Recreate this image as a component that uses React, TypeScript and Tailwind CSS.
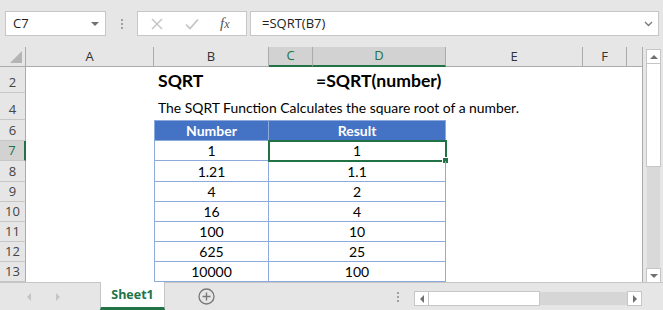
import React from "react";

const ui = { fontFamily: '"Open Sans", "Noto Sans", sans-serif' };
const cal = { fontFamily: 'Lato, "Liberation Sans", sans-serif' };

const headCols = [
  { key: "A", w: "w-[128px]", sel: false },
  { key: "B", w: "w-[115px]", sel: false },
  { key: "C", w: "w-[44px]", sel: true },
  { key: "D", w: "w-[133px]", sel: true },
  { key: "E", w: "w-[137px]", sel: false },
  { key: "F", w: "w-[44px]", sel: false },
];

const data = [
  { n: "1", r: "1", h: "h-[20px]" },
  { n: "1.21", r: "1.1", h: "h-[21px]" },
  { n: "4", r: "2", h: "h-[20px]" },
  { n: "16", r: "4", h: "h-[20px]" },
  { n: "100", r: "10", h: "h-[20px]" },
  { n: "625", r: "25", h: "h-[20px]" },
  { n: "10000", r: "100", h: "h-[20px]" },
];

function RowHead({ n, sel }: { n: number; sel?: boolean }) {
  return (
    <div
      className={
        "w-[26px] shrink-0 flex items-end justify-center pb-[3px] text-[13px] leading-none border-b border-[#c6c6c6] " +
        (sel
          ? "bg-[#d2d2d2] border-r-2 border-r-[#217346] text-[#217346]"
          : "bg-[#e6e6e6] border-r border-r-[#ababab] text-[#444]")
      }
      style={ui}
    >
      {n}
    </div>
  );
}

function Dots() {
  return (
    <div className="flex flex-col gap-[2px]">
      <span className="w-[2px] h-[2px] bg-[#a0a0a0]" />
      <span className="w-[2px] h-[2px] bg-[#a0a0a0]" />
      <span className="w-[2px] h-[2px] bg-[#a0a0a0]" />
    </div>
  );
}

export default function App() {
  return (
    <div className="w-[663px] h-[310px] bg-[#e6e6e6] overflow-hidden flex flex-col select-none" style={ui}>
      {/* formula bar */}
      <div className="h-[47px] shrink-0 flex items-start pt-[11px]">
        <div className="ml-[5px] w-[101px] h-[25px] bg-white border border-[#c6c6c6] flex items-center justify-between pl-[7px] pr-[6px] text-[13px] text-[#222]">
          <span>C7</span>
          <span className="w-0 h-0 border-l-[4px] border-r-[4px] border-t-[4px] border-l-transparent border-r-transparent border-t-[#707070]" />
        </div>
        <div className="w-[31px] h-[25px] flex items-center justify-center">
          <Dots />
        </div>
        <div className="w-[110px] h-[25px] bg-white border border-[#c6c6c6] flex items-center">
          <svg width="12" height="12" viewBox="0 0 12 12" className="ml-[13px]">
            <path d="M1 1 L11 11 M11 1 L1 11" stroke="#c2c2c2" strokeWidth="1.4" fill="none" />
          </svg>
          <svg width="14" height="12" viewBox="0 0 14 12" className="ml-[22px]">
            <path d="M1 6.5 L5 10.5 L13 1.5" stroke="#c2c2c2" strokeWidth="1.6" fill="none" />
          </svg>
          <span className="ml-[21px] italic text-[15px] text-[#555] leading-none" style={{ fontFamily: '"Liberation Serif", serif' }}>
            f<span className="text-[12px]">x</span>
          </span>
        </div>
        <div className="ml-[3px] w-[409px] h-[25px] bg-white border border-[#c6c6c6] flex items-center justify-between pl-[11px] pr-[5px] text-[13px] text-[#222]">
          <span>=SQRT(B7)</span>
          <svg width="9" height="6" viewBox="0 0 9 6">
            <path d="M1 1 L4.5 4.5 L8 1" stroke="#777" strokeWidth="1.3" fill="none" />
          </svg>
        </div>
      </div>

      {/* grid + vertical scrollbar */}
      <div className="h-[236px] shrink-0 flex">
        <div className="w-[643px] shrink-0 flex flex-col border-r border-[#ababab]">
          {/* column headers */}
          <div className="h-[20px] shrink-0 flex text-[13px]">
            <div className="w-[26px] shrink-0 border-r border-b border-[#ababab] flex items-end justify-end pr-[3px] pb-[3px]">
              <span className="w-0 h-0 border-l-[12px] border-t-[12px] border-l-transparent border-t-transparent border-b-0 border-r-0 relative">
                <span className="absolute -left-[12px] -top-[12px] w-0 h-0 border-b-[12px] border-l-[12px] border-b-[#b4b4b4] border-l-transparent" />
              </span>
            </div>
            {headCols.map((c) => (
              <div
                key={c.key}
                className={
                  c.w +
                  " shrink-0 border-r border-r-[#ababab] flex items-center justify-center " +
                  (c.sel
                    ? "bg-[#d2d2d2] border-b-2 border-b-[#217346] text-[#217346]"
                    : "border-b border-b-[#ababab] text-[#333]")
                }
              >
                {c.key}
              </div>
            ))}
            <div className="flex-1 border-b border-[#ababab]" />
          </div>

          {/* cells */}
          <div className="flex-1 bg-white flex flex-col text-black" style={cal}>
            <div className="h-[26px] flex">
              <RowHead n={2} />
              <div className="w-[128px] shrink-0" />
              <div className="w-[115px] shrink-0 flex items-end pl-[4px] text-[17.6px] font-bold leading-none pb-[3px]">SQRT</div>
              <div className="w-[44px] shrink-0" />
              <div className="w-[133px] shrink-0 flex items-end pl-[3px] text-[17.6px] font-bold leading-none pb-[3px] whitespace-nowrap">
                =SQRT(number)
              </div>
              <div className="flex-1" />
            </div>
            <div className="h-[27px] flex">
              <RowHead n={4} />
              <div className="w-[128px] shrink-0" />
              <div className="w-[115px] shrink-0 flex items-end pl-[4px] text-[13.9px] leading-none pb-[5px] whitespace-nowrap">
                The SQRT Function Calculates the square root of a number.
              </div>
              <div className="flex-1" />
            </div>
            <div className="h-[21px] flex">
              <RowHead n={6} />
              <div className="w-[128px] shrink-0" />
              <div className="w-[115px] shrink-0 bg-[#4472c4] border border-[#8ea9db] flex items-center justify-center text-white font-bold text-[14px] leading-none">
                Number
              </div>
              <div className="w-[177px] shrink-0 bg-[#4472c4] border-y border-r border-[#8ea9db] flex items-center justify-center text-white font-bold text-[14px] leading-none">
                Result
              </div>
              <div className="flex-1" />
            </div>
            {data.map((d, i) => (
              <div key={i} className={d.h + " flex"}>
                <RowHead n={7 + i} sel={i === 0} />
                <div className="w-[128px] shrink-0" />
                <div className="w-[115px] shrink-0 border-x border-b border-[#8ea9db] flex items-end justify-center pb-[2px] text-[14px] leading-none">
                  {d.n}
                </div>
                <div className="relative w-[177px] shrink-0 border-r border-b border-[#8ea9db] flex items-end justify-center pb-[2px] text-[14px] leading-none">
                  {d.r}
                  {i === 0 && (
                    <>
                      <span className="absolute -left-px -top-px w-[179px] h-[22px] border-2 border-[#217346]" />
                      <span className="absolute -right-[4px] -bottom-[4px] w-[7px] h-[7px] bg-[#217346] border border-white" />
                    </>
                  )}
                </div>
                <div className="flex-1" />
              </div>
            ))}
            <div className="flex-1 flex">
              <div className="w-[26px] bg-[#e6e6e6] border-r border-[#ababab]" />
            </div>
          </div>
        </div>

        {/* vertical scrollbar */}
        <div className="w-[20px] shrink-0 flex flex-col pl-[3px] pr-[2px] pt-[2px] pb-0">
          <div className="h-[15px] bg-white border border-[#c6c6c6] flex items-center justify-center">
            <span className="w-0 h-0 border-l-[4px] border-r-[4px] border-b-[4px] border-l-transparent border-r-transparent border-b-[#707070]" />
          </div>
          <div className="h-[103px] bg-white border-x border-b border-[#c6c6c6]" />
          <div className="flex-1 bg-[#d9d9d9] mx-[1px]" />
          <div className="h-[15px] bg-white border border-[#c6c6c6] flex items-center justify-center">
            <span className="w-0 h-0 border-l-[4px] border-r-[4px] border-t-[4px] border-l-transparent border-r-transparent border-t-[#707070]" />
          </div>
        </div>
      </div>

      {/* sheet tabs */}
      <div className="flex-1 flex border-t border-[#c6c6c6] -mt-[1px]">
        <div className="w-[100px] shrink-0 flex items-center">
          <span className="ml-[27px] w-0 h-0 border-t-[4px] border-b-[4px] border-r-[4px] border-t-transparent border-b-transparent border-r-[#c4c4c4]" />
          <span className="ml-[25px] w-0 h-0 border-t-[4px] border-b-[4px] border-l-[4px] border-t-transparent border-b-transparent border-l-[#c4c4c4]" />
        </div>
        <div className="w-[65px] shrink-0 -mt-[1px] bg-white border-x border-[#c6c6c6] border-b-[3px] border-b-[#217346] flex items-center justify-center pt-[1px] text-[12.5px] font-bold text-[#217346]">
          Sheet1
        </div>
        <div className="w-[82px] shrink-0 flex items-center justify-center">
          <svg width="17" height="17" viewBox="0 0 17 17">
            <circle cx="8.5" cy="8.5" r="7.5" stroke="#777" strokeWidth="1.3" fill="none" />
            <path d="M8.5 4.5 V12.5 M4.5 8.5 H12.5" stroke="#777" strokeWidth="1.4" />
          </svg>
        </div>
        <div className="w-[167px] shrink-0 flex items-center justify-end pr-[15px]">
          <Dots />
        </div>
        <div className="w-[228px] shrink-0 h-[15px] mt-[8px] flex">
          <div className="w-[15px] bg-white border border-[#c6c6c6] flex items-center justify-center">
            <span className="w-0 h-0 border-t-[4px] border-b-[4px] border-r-[4px] border-t-transparent border-b-transparent border-r-[#707070]" />
          </div>
          <div className="w-[111px] bg-white border-y border-r border-[#c6c6c6]" />
          <div className="flex-1 bg-[#d6d6d6] my-[1px]" />
          <div className="w-[15px] bg-white border border-[#c6c6c6] flex items-center justify-center">
            <span className="w-0 h-0 border-t-[4px] border-b-[4px] border-l-[4px] border-t-transparent border-b-transparent border-l-[#707070]" />
          </div>
        </div>
      </div>
    </div>
  );
}
